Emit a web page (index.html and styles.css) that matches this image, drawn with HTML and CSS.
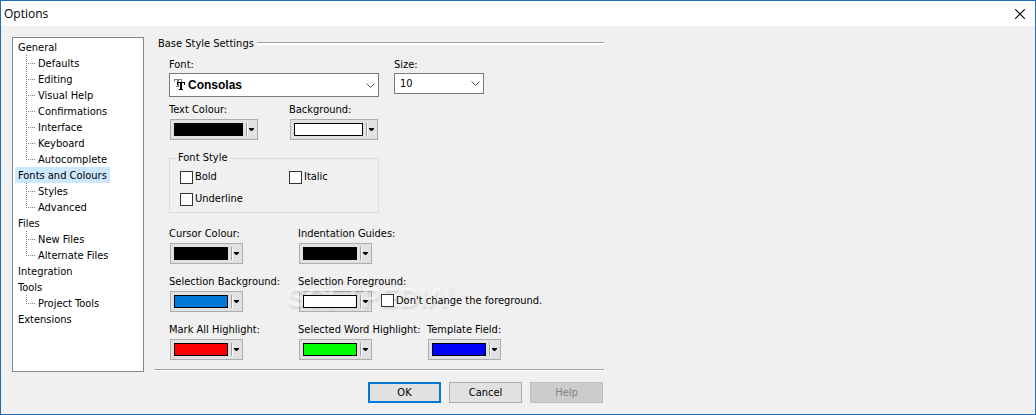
FILE: index.html
```html
<!DOCTYPE html>
<html lang="en">
<head>
  <meta charset="UTF-8">
  <title>Options</title>
  <link rel="stylesheet" href="styles.css">
</head>
<body>
  <div class="window">
    <header class="titlebar">
      <h1>Options</h1>
      <button class="close" type="button" aria-label="Close">
        <svg width="10" height="10" viewBox="0 0 10 10"><path d="M0 0L10 10M10 0L0 10" stroke="#000" stroke-width="1.1"/></svg>
      </button>
    </header>

    <form class="content">
      <!-- Category tree -->
      <nav class="tree">
        <ul>
          <li><a href="#">General</a>
            <ul class="branch">
              <li><a href="#">Defaults</a></li>
              <li><a href="#">Editing</a></li>
              <li><a href="#">Visual Help</a></li>
              <li><a href="#">Confirmations</a></li>
              <li><a href="#">Interface</a></li>
              <li><a href="#">Keyboard</a></li>
              <li><a href="#">Autocomplete</a></li>
            </ul>
          </li>
          <li><a href="#" class="selected">Fonts and Colours</a>
            <ul class="branch">
              <li><a href="#">Styles</a></li>
              <li><a href="#">Advanced</a></li>
            </ul>
          </li>
          <li><a href="#">Files</a>
            <ul class="branch">
              <li><a href="#">New Files</a></li>
              <li><a href="#">Alternate Files</a></li>
            </ul>
          </li>
          <li><a href="#">Integration</a></li>
          <li><a href="#">Tools</a>
            <ul class="branch">
              <li><a href="#">Project Tools</a></li>
            </ul>
          </li>
          <li><a href="#">Extensions</a></li>
        </ul>
      </nav>

      <!-- Settings -->
      <main class="panel">
        <h2>Base Style Settings</h2>

        <div class="settings">
          <div class="row">
            <div class="field font-field">
              <label for="font">Font:</label>
              <div class="combo font-combo">
                <svg class="tt" width="12" height="12" viewBox="0 0 12 12" shape-rendering="crispEdges">
                  <path d="M0 0H8V3H7V1H5V8H3V1H1V3H0ZM2 7H5V8H2Z" fill="#808080"/>
                  <path d="M3 3H11V6H10V4H8V10H9V11H5V10H6V4H4V6H3Z" fill="#000"/>
                </svg>
                <select id="font"><option>Consolas</option></select>
                <svg class="chevron" width="9" height="6" viewBox="0 0 9 6"><path d="M.5 .5L4.500 4.500L8.500 .5" fill="none" stroke="#555"/></svg>
              </div>
            </div>
            <div class="field size-field">
              <label for="size">Size:</label>
              <div class="combo">
                <select id="size"><option>10</option></select>
                <svg class="chevron" width="9" height="6" viewBox="0 0 9 6"><path d="M.5 .5L4.500 4.500L8.500 .5" fill="none" stroke="#555"/></svg>
              </div>
            </div>
          </div>

          <div class="wide-colours">
            <div class="field">
              <label for="text-colour">Text Colour:</label>
              <button id="text-colour" class="colour wide" type="button"><span class="swatch black"></span><span class="arrow"></span></button>
            </div>
            <div class="field">
              <label for="background">Background:</label>
              <button id="background" class="colour wide" type="button"><span class="swatch white"></span><span class="arrow"></span></button>
            </div>
          </div>

          <fieldset class="font-style">
            <legend>Font Style</legend>
            <label class="check"><input type="checkbox">Bold</label>
            <label class="check"><input type="checkbox">Italic</label>
            <label class="check"><input type="checkbox">Underline</label>
          </fieldset>

          <div class="colours">
            <div class="field">
              <label for="cursor">Cursor Colour:</label>
              <button id="cursor" class="colour" type="button"><span class="swatch black"></span><span class="arrow"></span></button>
            </div>
            <div class="field span">
              <label for="guides">Indentation Guides:</label>
              <button id="guides" class="colour" type="button"><span class="swatch black"></span><span class="arrow"></span></button>
            </div>
            <div class="field">
              <label for="sel-back">Selection Background:</label>
              <button id="sel-back" class="colour" type="button"><span class="swatch azure"></span><span class="arrow"></span></button>
            </div>
            <div class="field span">
              <label for="sel-fore">Selection Foreground:</label>
              <div class="with-check">
                <button id="sel-fore" class="colour" type="button"><span class="swatch white"></span><span class="arrow"></span></button>
                <label class="check"><input type="checkbox">Don't change the foreground.</label>
              </div>
              <span class="watermark">SOFTPEDIA<sup>®</sup></span>
            </div>
            <div class="field">
              <label for="mark-all">Mark All Highlight:</label>
              <button id="mark-all" class="colour" type="button"><span class="swatch red"></span><span class="arrow"></span></button>
            </div>
            <div class="field">
              <label for="word">Selected Word Highlight:</label>
              <button id="word" class="colour" type="button"><span class="swatch lime"></span><span class="arrow"></span></button>
            </div>
            <div class="field">
              <label for="template">Template Field:</label>
              <button id="template" class="colour" type="button"><span class="swatch blue"></span><span class="arrow"></span></button>
            </div>
          </div>
        </div>

        <div class="actions">
          <button class="btn default" type="button">OK</button>
          <button class="btn" type="button">Cancel</button>
          <button class="btn" type="button" disabled>Help</button>
        </div>
      </main>
    </form>
  </div>
</body>
</html>
```

FILE: styles.css
```css
* {
  box-sizing: border-box;
}
body {
  margin: 0;
  background-color: #f0f0f0;
  color: #000;
  font-family: "DejaVu Sans Condensed", "Open Sans", sans-serif;
  font-size: 11px;
  line-height: 14px;
}
button, select, input {
  font: inherit;
  color: inherit;
  margin: 0;
}
.window {
  display: flex;
  flex-direction: column;
  min-height: 100vh;
  border: 1px solid #1a6fb5;
}

/* title bar */
.titlebar {
  display: flex;
  align-items: center;
  justify-content: space-between;
  height: 25px;
  padding: 0 10px 0 3px;
  background-color: #fff;
}
h1 {
  margin: 0;
  font-family: "Open Sans", sans-serif;
  font-size: 12px;
  font-weight: normal;
}
.close {
  display: flex;
  padding: 0;
  border: 0;
  background: none;
}

.content {
  display: flex;
  gap: 10px;
  padding: 11px 11px 8px;
}

/* tree */
.tree {
  width: 132px;
  height: 335px;
  padding: 1px 2px;
  border: 1px solid #828790;
  background-color: #fff;
}
.tree ul {
  margin: 0;
  padding: 0;
  list-style: none;
}
.tree a {
  display: block;
  width: max-content;
  padding: 2px 3px 0;
  color: inherit;
  text-decoration: none;
}
.tree .selected {
  background-color: #cce8ff;
}
.tree .branch {
  padding-left: 11px;
}
.branch li {
  display: flex;
}
.branch li::before {
  content: "";
  width: 9px;
  height: 16px;
  background-image: linear-gradient(90deg, #808080 50%, transparent 50%), linear-gradient(#808080 50%, transparent 50%);
  background-size: 2px 1px, 1px 2px;
  background-position: 0 8px, 0 0;
  background-repeat: repeat-x, repeat-y;
}
.branch li:last-child::before {
  height: 9px;
}

/* settings panel */
.panel {
  width: 450px;
}
h2 {
  display: flex;
  gap: 3px;
  margin: 0;
  padding-left: 4px;
  font-size: 11px;
  font-weight: normal;
}
h2::after {
  content: "";
  flex: 1;
  height: 2px;
  margin-top: 5px;
  border-top: 1px solid #a0a0a0;
  background-color: #fff;
}
.settings {
  padding: 6px 0 9px 15px;
  border-bottom: 1px solid #a0a0a0;
  box-shadow: 0 1px #fff;
}
.row {
  display: flex;
  gap: 15px;
}
.field > label {
  display: block;
  width: max-content;
  padding-top: 1px;
}
.font-field {
  width: 210px;
}
.size-field {
  width: 90px;
}
.combo {
  position: relative;
  margin-top: 1px;
}
.combo select {
  display: block;
  width: 100%;
  height: 21px;
  padding: 0 20px 0 5px;
  border: 1px solid #7a7a7a;
  border-radius: 0;
  background-color: #fff;
  appearance: none;
}
.font-combo select {
  height: 24px;
  padding-left: 18px;
  font-family: "Liberation Sans", sans-serif;
  font-size: 12px;
  font-weight: bold;
}
.chevron {
  position: absolute;
  top: 8px;
  right: 4px;
  pointer-events: none;
}
.font-combo .chevron {
  top: 10px;
}
.tt {
  position: absolute;
  top: 6px;
  left: 5px;
}
.wide-colours {
  display: grid;
  grid-template-columns: 120px auto;
  margin-top: 5px;
}

/* colour picker button */
.colour {
  display: flex;
  align-items: center;
  width: 73px;
  height: 21px;
  margin: 2px 0 0 1px;
  padding: 3px;
  border: 1px solid #adadad;
  background-color: #e1e1e1;
}
.colour.wide {
  width: 88px;
}
.swatch {
  flex: 1;
  height: 13px;
  margin-right: 3px;
  border: 1px solid #000;
}
.black { background-color: #000; }
.white { background-color: #fff; }
.azure { background-color: #0078d7; }
.red { background-color: #f00; }
.lime { background-color: #0f0; }
.blue { background-color: #00f; }
.arrow {
  display: flex;
  align-items: center;
  height: 13px;
  padding-left: 2px;
  border-left: 1px solid #a0a0a0;
  box-shadow: inset 1px 0 #fff;
}
.arrow::after {
  content: "";
  width: 5px;
  height: 3px;
  background-color: #000;
  clip-path: polygon(0 0, 100% 0, 100% 33%, 60% 100%, 40% 100%, 0 33%);
}

/* font style group */
.font-style {
  display: grid;
  grid-template-columns: 109px auto;
  gap: 8px 0;
  width: 210px;
  margin: 11px 0 13px;
  padding: 5px 10px 6px;
  border: 1px solid #dcdcdc;
}
.font-style legend {
  margin-left: -4px;
  padding: 0 2px;
}
.check {
  display: flex;
  align-items: center;
  gap: 2px;
}
.check input {
  width: 13px;
  height: 13px;
  border: 1px solid #333;
  background-color: #fff;
  appearance: none;
}
.colours {
  display: grid;
  grid-template-columns: 129px 129px auto;
  row-gap: 10px;
}
.span {
  position: relative;
  grid-column: span 2;
}
.span label, .span .swatch, .span .arrow {
  position: relative;
  z-index: 1;
}
.with-check {
  display: flex;
  gap: 9px;
}

.watermark {
  position: absolute;
  top: 8px;
  left: -11px;
  color: rgba(255, 255, 255, 0.5);
  font-family: "Liberation Sans", sans-serif;
  font-size: 28px;
  font-weight: bold;
  line-height: 32px;
  text-shadow: 1px 2px 2px rgba(0, 0, 0, 0.1);
  pointer-events: none;
}
.watermark sup {
  font-size: 10px;
  line-height: 0;
  vertical-align: 14px;
}

/* dialog buttons */
.actions {
  display: flex;
  justify-content: flex-end;
  gap: 8px;
  padding: 12px 1px 0 0;
}
.btn {
  width: 73px;
  height: 21px;
  padding: 1px 0 0;
  border: 1px solid #adadad;
  background-color: #e1e1e1;
}
.btn.default {
  border: 2px solid #0078d7;
}
.btn:disabled {
  border-color: #bfbfbf;
  background-color: #ccc;
  color: #838383;
}
```
